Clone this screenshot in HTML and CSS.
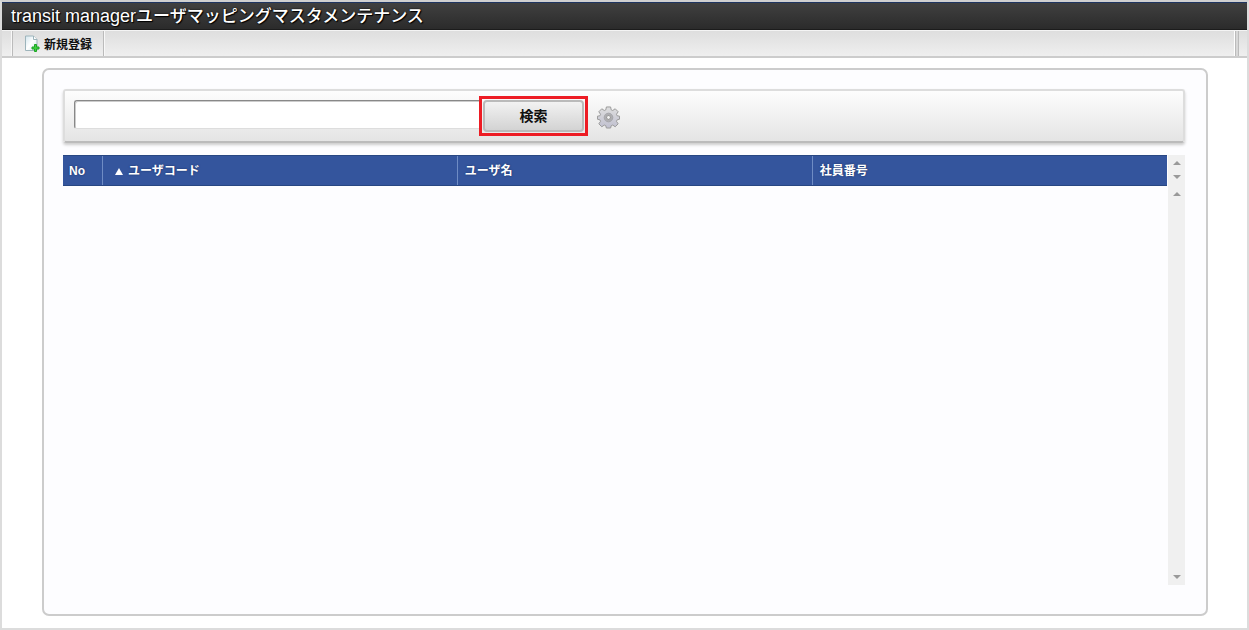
FILE: index.html
```
<!DOCTYPE html>
<html lang="ja">
<head>
  <meta charset="UTF-8" />
  <title>transit managerユーザマッピングマスタメンテナンス</title>
  <link rel="stylesheet" href="styles.css">
</head>
<body>

  <h1><span class="product">transit manager</span>ユーザマッピングマスタメンテナンス</h1>

  <div class="toolbar">
    <button type="button" class="tool">
      <svg width="16" height="17" viewBox="0 0 16 17">
        <defs>
          <linearGradient id="paper" x1="0" y1="0" x2="1" y2="1">
            <stop offset="0" stop-color="#d3e6ee" />
            <stop offset="0.5" stop-color="#ffffff" />
            <stop offset="1" stop-color="#cfe6ea" />
          </linearGradient>
        </defs>
        <path d="M1.500 1h8l3.500 3.500v11h-11.500z" fill="url(#paper)" stroke="#9db4bb" />
        <path d="M9.500 1v3.500h3.500" fill="#fff" stroke="#9db4bb" />
        <path d="M10.500 9.500h2v2.500h2.500v2h-2.500v2.500h-2v-2.500h-2.500v-2h2.500z" fill="#3fd03f" stroke="#1da524" stroke-linejoin="round" />
      </svg>
      新規登録
    </button>
    <div class="handle"></div>
  </div>

  <main class="panel">
    <form class="search">
      <input type="text" class="keyword" aria-label="検索キーワード">
      <div class="highlight"><button type="button" class="search-button">検索</button></div>
      <button type="button" class="settings" aria-label="検索設定">
        <svg width="23" height="23" viewBox="-12 -12 24 24">
          <defs>
            <linearGradient id="metal" x1="0" y1="0" x2="0" y2="1">
              <stop offset="0" stop-color="#dedede" />
              <stop offset="1" stop-color="#c0c0d0" />
            </linearGradient>
          </defs>
          <path d="M-2.200-11h4.400l.6 3 1.600.7 2.600-1.800 3.100 3.100-1.800 2.600.7 1.600 2.500.4v3.200l-2.500.6-.7 1.600 1.800 2.600-3.100 3.100-2.600-1.800-1.600.7-.6 2.400h-4.400l-.6-2.400-1.600-.7-2.600 1.800-3.100-3.100 1.800-2.600-.7-1.600-2.500-.6v-3.200l2.500-.4.7-1.600-1.800-2.600 3.100-3.100 2.600 1.800 1.600-.7z" fill="url(#metal)" stroke="#999" />
          <circle r="4.500" fill="#b0b0b4" stroke="#a4a4a8" />
          <circle r="2.500" fill="#8c8c8c" stroke="#aaa" />
          <circle r="1.500" fill="#f4f4f4" />
        </svg>
      </button>
    </form>

    <div class="list">
      <div class="table-area">
        <table>
          <thead>
            <tr>
              <th class="no">No</th>
              <th class="sorted"><span class="sort-mark"></span>ユーザコード</th>
              <th>ユーザ名</th>
              <th>社員番号</th>
            </tr>
          </thead>
          <tbody></tbody>
        </table>
      </div>
      <div class="scroll">
        <div class="scroll-part">
          <span class="up"></span>
          <span class="down"></span>
        </div>
        <div class="scroll-part scroll-body">
          <span class="up"></span>
          <span class="down"></span>
        </div>
      </div>
    </div>
  </main>

</body>
</html>
```
FILE: styles.css
```
* {
  box-sizing: border-box;
}

body {
  margin: 0;
  min-height: 100vh;
  display: flex;
  flex-direction: column;
  border: 2px solid #dcdcdc;
  border-top-color: #d0d0d0;
  background: #fff;
  font-family: "Liberation Sans", "Noto Sans CJK JP", sans-serif;
  font-size: 12px;
  color: #111;
}

button {
  font: inherit;
  color: inherit;
}

h1 {
  margin: 0;
  height: 28px;
  padding-left: 9px;
  border-top: 1px solid #1f3561;
  border-bottom: 1px solid #1c1c1c;
  background: linear-gradient(#404040, #2b2b2b);
  color: #fff;
  font-size: 17px;
  font-weight: 500;
  line-height: 27px;
  white-space: nowrap;
  text-shadow: 0 0 2px #000, 1px 1px 1px #000;
}

.product {
  font-size: 18px;
}

.toolbar {
  display: flex;
  height: 28px;
  padding-left: 10px;
  border-top: 1px solid #f4f4f4;
  border-bottom: 2px solid #ccc;
  background: linear-gradient(#dedede, #efefef);
}

.tool {
  display: flex;
  align-items: center;
  gap: 4px;
  padding: 0 11px;
  border: 0;
  border-left: 1px solid #bbb;
  border-right: 1px solid #bbb;
  box-shadow: -1px 0 #f8f8f8, 1px 0 #f8f8f8;
  background: none;
  font-weight: bold;
}

.handle {
  width: 4px;
  margin-left: auto;
  margin-right: 8px;
  border: 1px solid #bbb;
  border-width: 0 1px;
  background: #d8d8d8;
  box-shadow: -1px 0 #fff;
}

.panel {
  flex: 1;
  display: flex;
  flex-direction: column;
  margin: 10px 39px 12px 40px;
  padding: 19px 21px 29px 19px;
  border: 2px solid #ccc;
  border-radius: 7px;
  background: #fdfdff;
}

.search {
  display: flex;
  align-items: flex-start;
  height: 54px;
  padding: 5px 10px;
  border: 2px solid #ddd;
  border-bottom-color: #bbb;
  border-radius: 3px;
  background: linear-gradient(#fdfdfd, #e4e4e4);
  box-shadow: 0 2px 3px #ccc;
}

.keyword {
  width: 405px;
  height: 29px;
  margin: 4px 0 0 -1px;
  padding: 0 6px;
  border: 1px solid #888;
  border-right-width: 0;
  border-bottom-color: #ddd;
  border-radius: 3px 0 0 3px;
  background: #fff;
  box-shadow: inset 1px 1px #ccc;
  font-size: 14px;
}

.highlight {
  border: 3px solid #ed1c24;
  padding: 1px;
}

.search-button {
  display: block;
  width: 101px;
  height: 32px;
  border: 2px solid #bababa;
  border-radius: 4px;
  background: linear-gradient(#f2f2f2, #d3d3d3);
  font-size: 14px;
  font-weight: bold;
  line-height: 26px;
}

.settings {
  display: block;
  margin: 10px 0 0 9px;
  padding: 0;
  border: 0;
  background: none;
}

.settings svg {
  display: block;
}

.list {
  flex: 1;
  display: flex;
  gap: 1px;
  margin-top: 12px;
}

.table-area {
  flex: 1;
}

table {
  width: 100%;
  table-layout: fixed;
  border-collapse: collapse;
}

th {
  height: 30px;
  padding: 0 7px;
  border-top: 1px solid #284782;
  border-bottom: 1px solid #284782;
  border-left: 1px solid #6f8cc4;
  background: #34559d;
  color: #fff;
  line-height: 16px;
  text-align: left;
  text-shadow: 0 0 2px #152d61;
}

.no {
  width: 39px;
  padding: 0 5px;
  border-left-color: #34559d;
}

.sorted {
  padding-left: 12px;
}

.sort-mark {
  display: inline-block;
  margin-right: 5px;
  border: 4px solid transparent;
  border-top: 0;
  border-bottom: 7px solid #fff;
}

.scroll {
  display: flex;
  flex-direction: column;
  width: 17px;
  background: #f0f0f0;
}

.scroll-part {
  display: flex;
  flex-direction: column;
  align-items: center;
  justify-content: space-between;
  height: 30px;
  padding: 6px 0;
}

.scroll-body {
  flex: 1;
  padding-top: 7px;
}

.up,
.down {
  border: 4px solid transparent;
}

.up {
  border-top: 0;
  border-bottom-color: #999;
}

.down {
  border-bottom: 0;
  border-top-color: #999;
}
```
